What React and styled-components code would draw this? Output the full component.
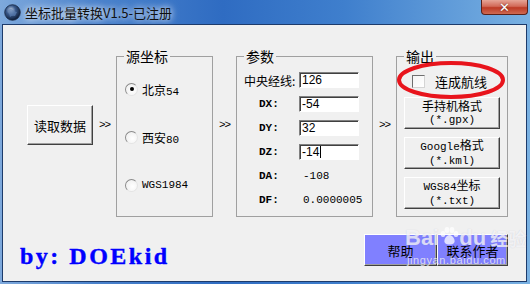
import React from "react";
import styled, { createGlobalStyle } from "styled-components";

const CJK = `"Noto Sans CJK SC", "Noto Sans", sans-serif`;
const MONO = `"Liberation Mono", "Noto Sans CJK SC", monospace`;

const GlobalStyle = createGlobalStyle`
  body {
    margin: 0;
    background: #ffffff;
  }
`;

const Window = styled.div`
  position: relative;
  width: 530px;
  height: 284px;
  box-sizing: border-box;
  display: flex;
  flex-direction: column;
  padding: 0 3px 2px 2px;
  overflow: hidden;
  font-family: ${CJK};
  background: linear-gradient(
    90deg,
    #7ea9dc 0%,
    #4a82cc 18%,
    #2f6cc2 42%,
    #3f7fcd 65%,
    #79b1e2 100%
  );
`;

const TitleBar = styled.div`
  height: 24px;
  display: flex;
  align-items: center;
  padding-left: 2px;
`;

const TitleText = styled.span`
  margin-left: 4px;
  font-size: 13px;
  color: #101010;
  text-shadow: 0 0 6px rgba(255, 255, 255, 0.95), 0 0 10px rgba(255, 255, 255, 0.7);
`;

const CloseButton = styled.div`
  align-self: flex-start;
  margin-left: auto;
  margin-right: -1px;
  width: 47px;
  height: 15px;
  box-sizing: border-box;
  border: 1px solid #5a2119;
  border-top: none;
  border-radius: 0 0 4px 4px;
  background: linear-gradient(180deg, #e6a597 0%, #d26a58 45%, #bd3a25 55%, #cf6a52 100%);
  display: flex;
  align-items: center;
  justify-content: center;
  color: #fff;
  font-family: "DejaVu Sans", sans-serif;
  font-weight: bold;
  font-size: 13px;
  line-height: 1;
  text-shadow: 0 0 2px #5a2119;
`;

const Client = styled.div`
  position: relative;
  flex: 1;
  background: #f0f0f0;
  border: 1px solid #1d3b6b;
  padding-top: 23px;
  display: flex;
  flex-direction: column;
`;

const MainRow = styled.div`
  display: flex;
  align-items: flex-start;
`;

const RaisedButton = styled.div`
  box-sizing: border-box;
  display: flex;
  flex-direction: column;
  align-items: center;
  justify-content: center;
  background: ${(p) => p.$bg || "#f0f0f0"};
  border: 1px solid;
  border-color: #ffffff #404040 #404040 #ffffff;
  box-shadow: inset -1px -1px 0 #a0a0a0;
  color: #000;
`;

const ReadButton = styled(RaisedButton)`
  margin-left: 24px;
  margin-top: 57px;
  width: 66px;
  height: 40px;
  font-size: 13px;
`;

const Arrow = styled.div`
  width: 23px;
  margin-top: 70px;
  text-align: center;
  font-family: ${MONO};
  font-size: 11px;
  line-height: 14px;
  letter-spacing: -1px;
`;

const Group = styled.fieldset`
  box-sizing: border-box;
  width: ${(p) => p.$width}px;
  height: 169px;
  margin: 0;
  padding: 0 7px;
  border: 1px solid #a0a0a0;
  min-width: 0;
`;

const Legend = styled.legend`
  padding: 0 2px;
  font-size: 14px;
  line-height: 16px;
  color: #000;
`;

const RadioList = styled.div`
  display: flex;
  flex-direction: column;
  gap: 32px;
  padding-top: 17px;
`;

const RadioRow = styled.div`
  height: 16px;
  display: flex;
  align-items: center;
  gap: 4px;
  font-size: 12px;
`;

const RadioDot = styled.span`
  box-sizing: border-box;
  width: 13px;
  height: 13px;
  margin-left: 1px;
  border-radius: 50%;
  border: 1px solid;
  border-color: #8a8a8a #e4e4e4 #e4e4e4 #8a8a8a;
  background: radial-gradient(circle at 60% 60%, #ffffff 0%, #ececec 100%);
  display: flex;
  align-items: center;
  justify-content: center;

  &::after {
    content: "";
    width: 4px;
    height: 4px;
    border-radius: 50%;
    background: ${(p) => (p.$checked ? "#000" : "transparent")};
  }
`;

const Mono = styled.span`
  font-family: ${MONO};
  font-size: 11px;
`;

const ParamGrid = styled.div`
  display: grid;
  grid-template-columns: 55px 60px;
  grid-auto-rows: 16px;
  row-gap: 8px;
  align-items: center;
  padding-top: 8px;
`;

const ParamLabel = styled.span`
  white-space: nowrap;
  font-size: ${(p) => (p.$mono ? "11px" : "12px")};
  font-family: ${(p) => (p.$mono ? MONO : CJK)};
  font-weight: ${(p) => (p.$mono ? "bold" : "normal")};
  padding-left: ${(p) => (p.$mono ? "15px" : "0")};
`;

const Field = styled.div`
  box-sizing: border-box;
  height: 16px;
  background: #ffffff;
  border: 1px solid;
  border-color: #808080 #ffffff #ffffff #808080;
  box-shadow: inset 1px 1px 0 #404040;
  padding: 0 2px;
  font-family: "Liberation Sans", Arial, sans-serif;
  font-size: 12px;
  line-height: 15px;
  display: flex;
  align-items: center;
`;

const Caret = styled.span`
  width: 1px;
  height: 12px;
  margin-left: 1px;
  background: #000;
`;

const Value = styled.span`
  padding-left: 4px;
  font-family: ${MONO};
  font-size: 11px;
  white-space: nowrap;
`;

const OutputList = styled.div`
  display: flex;
  flex-direction: column;
  gap: 8px;
  padding-top: 9px;
`;

const CheckRow = styled.div`
  height: 16px;
  display: flex;
  align-items: center;
  gap: 10px;
  margin-left: 8px;
  font-size: 13px;
`;

const CheckBox = styled.span`
  box-sizing: border-box;
  width: 13px;
  height: 13px;
  border: 1px solid;
  border-color: #6f6f6f #d4d4d4 #d4d4d4 #6f6f6f;
  background: linear-gradient(135deg, #f4f4f4, #ffffff);
`;

const OutButton = styled(RaisedButton)`
  width: 96px;
  height: 32px;
  font-size: 12px;
  line-height: 14px;
`;

const BottomRow = styled.div`
  display: flex;
  justify-content: space-between;
  align-items: flex-start;
  margin-top: 17px;
`;

const Signature = styled.div`
  margin-left: 17px;
  margin-top: 7px;
  font-family: "Liberation Serif", serif;
  font-weight: 600;
  font-size: 24px;
  line-height: 30px;
  letter-spacing: 2.5px;
  color: #0000ff;
  -webkit-text-stroke: 0.4px #0000ff;
  white-space: pre;
`;

const ActionButtons = styled.div`
  display: flex;
  margin-right: 18px;
`;

const ActionButton = styled(RaisedButton)`
  width: ${(p) => p.$width}px;
  height: 32px;
  font-size: 13px;
`;

const Marker = styled.svg`
  position: absolute;
  left: 395px;
  top: 60px;
`;

const Watermark = styled.div`
  position: absolute;
  left: 405px;
  top: 226px;
  display: flex;
  flex-direction: column;
  align-items: flex-start;
  color: rgba(255, 255, 255, 0.72);
  text-shadow: 0 0 1px rgba(120, 120, 150, 0.3);
  pointer-events: none;
`;

const MarkRow = styled.div`
  display: flex;
  align-items: flex-end;
  font-family: "Liberation Sans", Arial, sans-serif;
  font-weight: bold;
  font-size: 22px;
  line-height: 24px;
`;

const MarkCjk = styled.span`
  margin-left: 4px;
  font-family: ${CJK};
  font-size: 18px;
`;

const MarkUrl = styled.div`
  margin-top: 4px;
  margin-left: 2px;
  font-family: "Liberation Sans", Arial, sans-serif;
  font-size: 11px;
  letter-spacing: 0.6px;
`;

const Globe = () => (
  <svg width="17" height="17" viewBox="0 0 17 17">
    <defs>
      <radialGradient id="g" cx="40%" cy="35%" r="65%">
        <stop offset="0%" stopColor="#c9d6e8" />
        <stop offset="45%" stopColor="#3a5a8c" />
        <stop offset="100%" stopColor="#0e1d38" />
      </radialGradient>
    </defs>
    <circle cx="8.5" cy="8.5" r="7.8" fill="url(#g)" stroke="#1b2a44" strokeWidth="0.8" />
    <path d="M4 6 Q7 4 9 6 T13 8 L11 12 Q8 11 6 13 Z" fill="#5c7fb0" opacity="0.7" />
  </svg>
);

const Paw = () => (
  <svg width="20" height="20" viewBox="0 0 20 20" style={{ marginBottom: 4 }}>
    <g fill="rgba(255,255,255,0.75)">
      <ellipse cx="4" cy="8" rx="2.4" ry="3" />
      <ellipse cx="8" cy="4" rx="2.4" ry="3" />
      <ellipse cx="13" cy="4" rx="2.4" ry="3" />
      <ellipse cx="17" cy="8" rx="2.4" ry="3" />
      <path d="M10.5 9 C7 9 4 15 6 17 C8 19 13 19 15 17 C17 15 14 9 10.5 9 Z" />
    </g>
  </svg>
);

const params = [
  { label: "中央经线:", value: "126", field: true },
  { label: "DX:", value: "-54", field: true, mono: true },
  { label: "DY:", value: "32", field: true, mono: true },
  { label: "DZ:", value: "-14", field: true, mono: true, caret: true },
  { label: "DA:", value: "-108", mono: true },
  { label: "DF:", value: "0.0000005", mono: true },
];

const App = () => {
  return (
    <>
      <GlobalStyle />
      <Window>
        <TitleBar>
          <Globe />
          <TitleText>坐标批量转换V1.5-已注册</TitleText>
          <CloseButton>✕</CloseButton>
        </TitleBar>
        <Client>
          <MainRow>
            <ReadButton>读取数据</ReadButton>
            <Arrow>&gt;&gt;</Arrow>
            <Group $width={97}>
              <Legend>源坐标</Legend>
              <RadioList>
                <RadioRow>
                  <RadioDot $checked />
                  <span>
                    北京<Mono>54</Mono>
                  </span>
                </RadioRow>
                <RadioRow>
                  <RadioDot />
                  <span>
                    西安<Mono>80</Mono>
                  </span>
                </RadioRow>
                <RadioRow>
                  <RadioDot />
                  <Mono>WGS1984</Mono>
                </RadioRow>
              </RadioList>
            </Group>
            <Arrow>&gt;&gt;</Arrow>
            <Group $width={137}>
              <Legend>参数</Legend>
              <ParamGrid>
                {params.map((p) => (
                  <React.Fragment key={p.label}>
                    <ParamLabel $mono={p.mono}>{p.label}</ParamLabel>
                    {p.field ? (
                      <Field>
                        {p.value}
                        {p.caret && <Caret />}
                      </Field>
                    ) : (
                      <Value>{p.value}</Value>
                    )}
                  </React.Fragment>
                ))}
              </ParamGrid>
            </Group>
            <Arrow>&gt;&gt;</Arrow>
            <Group $width={112}>
              <Legend>输出</Legend>
              <OutputList>
                <CheckRow>
                  <CheckBox />
                  <span>连成航线</span>
                </CheckRow>
                <OutButton>
                  <span>手持机格式</span>
                  <Mono>(*.gpx)</Mono>
                </OutButton>
                <OutButton>
                  <span>
                    <Mono>Google</Mono>格式
                  </span>
                  <Mono>(*.kml)</Mono>
                </OutButton>
                <OutButton>
                  <span>
                    <Mono>WGS84</Mono>坐标
                  </span>
                  <Mono>(*.txt)</Mono>
                </OutButton>
              </OutputList>
            </Group>
          </MainRow>
          <BottomRow>
            <Signature>by: DOEkid</Signature>
            <ActionButtons>
              <ActionButton $bg="#8080ff" $width={73}>
                帮助
              </ActionButton>
              <ActionButton $bg="#8080ff" $width={71}>
                联系作者
              </ActionButton>
            </ActionButtons>
          </BottomRow>
        </Client>
        <Marker width="112" height="40" viewBox="0 0 112 40">
          <ellipse cx="56" cy="20" rx="52" ry="17" fill="none" stroke="#e8141c" strokeWidth="4" />
        </Marker>
        <Watermark>
          <MarkRow>
            <span>Bai</span>
            <Paw />
            <span>du</span>
            <MarkCjk>经验</MarkCjk>
          </MarkRow>
          <MarkUrl>jingyan.baidu.com</MarkUrl>
        </Watermark>
      </Window>
    </>
  );
};

export default App;
